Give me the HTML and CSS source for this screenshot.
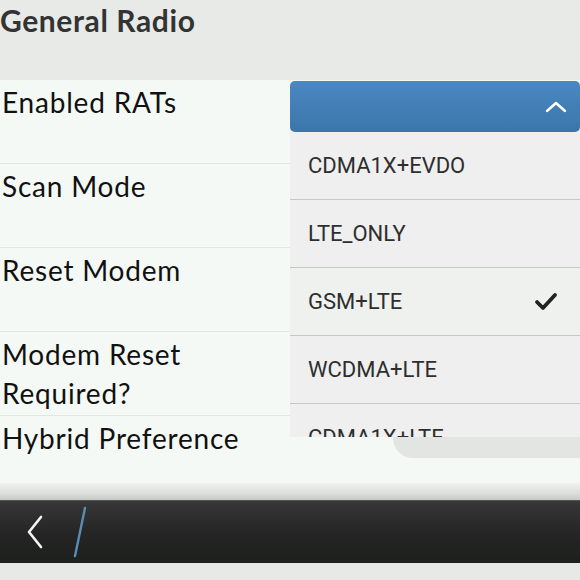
FILE: index.html
```html
<!DOCTYPE html>
<html>
<head>
<meta charset="utf-8">
<link rel="stylesheet" href="styles.css">
</head>
<body>
<div class="page">
  <header class="title-area">
    <h1 class="title">General Radio</h1>
  </header>
  <main class="list">
    <div class="row"><span class="label">Enabled RATs</span></div>
    <div class="row"><span class="label">Scan Mode</span></div>
    <div class="row"><span class="label">Reset Modem</span></div>
    <div class="row"><span class="label">Modem Reset<br>Required?</span></div>
    <div class="row last"><span class="label">Hybrid Preference</span></div>
  </main>
  <div class="shadow-strip"></div>
  <footer class="actionbar">
    <svg class="back" width="20" height="34" viewBox="0 0 20 34"><path d="M15 2 L3 17 L15 32" fill="none" stroke="#f4f4f4" stroke-width="2.6" stroke-linecap="round" stroke-linejoin="round"/></svg>
    <svg class="slash" width="16" height="52" viewBox="0 0 16 52"><path d="M13 2 L3 50" fill="none" stroke="#5a8db5" stroke-width="2.4" stroke-linecap="round"/></svg>
  </footer>
  <div class="bottom-strip"></div>

  <div class="dropdown-tail"></div>
  <div class="dropdown">
    <div class="dd-head">
      <svg width="22" height="14" viewBox="0 0 22 14"><path d="M2 11 L11 3 L20 11" fill="none" stroke="#ffffff" stroke-width="2.4" stroke-linecap="round" stroke-linejoin="round"/></svg>
    </div>
    <div class="dd-list">
      <div class="opt">CDMA1X+EVDO</div>
      <div class="opt">LTE_ONLY</div>
      <div class="opt selected">GSM+LTE
        <svg class="check" width="24" height="20" viewBox="0 0 24 20"><path d="M3 10 L9 16 L21 3" fill="none" stroke="#222" stroke-width="3.8" stroke-linecap="round" stroke-linejoin="round"/></svg>
      </div>
      <div class="opt">WCDMA+LTE</div>
      <div class="opt">CDMA1X+LTE</div>
    </div>
  </div>
</div>
</body>
</html>
```

FILE: styles.css
```css
html, body {
  margin: 0;
  padding: 0;
}
body {
  width: 580px;
  height: 580px;
  overflow: hidden;
  background: #e7eae7;
  font-family: Lato, "Open Sans", sans-serif;
}
.page {
  position: relative;
  width: 580px;
  height: 580px;
  display: flex;
  flex-direction: column;
}
.title-area {
  height: 80px;
  background: #e7eae7;
  flex: none;
}
.title {
  margin: 0;
  padding: 2px 0 0 0;
  font-size: 30px;
  line-height: 36px;
  font-weight: 700;
  letter-spacing: 0.6px;
  color: #333;
}
.list {
  background: #f5f9f5;
  height: 403px;
  flex: none;
}
.row {
  height: 83px;
  border-bottom: 1px solid #e2e6e2;
  box-sizing: content-box;
  padding: 0 0 0 2px;
}
.row.last {
  border-bottom: none;
}
.label {
  display: block;
  padding-top: 3px;
  font-size: 28px;
  line-height: 39px;
  letter-spacing: 0.8px;
  color: #111;
}
.shadow-strip {
  height: 17px;
  flex: none;
  background: linear-gradient(#eef1ee, #dcdfdc 60%, #c5c8c5);
}
.actionbar {
  height: 63px;
  flex: none;
  background: linear-gradient(#373737, #232423 55%, #1e201e);
  border-top: 1px solid #555;
  box-sizing: border-box;
  display: flex;
  align-items: center;
  padding-left: 26px;
  gap: 26px;
}
.bottom-strip {
  flex: 1;
  background: #e6e9e6;
}
.dropdown {
  position: absolute;
  left: 290px;
  top: 81px;
  width: 290px;
  height: 356px;
  overflow: hidden;
  background: #efefef;
}
.dd-head {
  height: 51px;
  border-radius: 5px;
  background: linear-gradient(#4b88c3, #3b76aa);
  display: flex;
  align-items: center;
  justify-content: flex-end;
  padding-right: 13px;
}
.dd-list {
  font-family: Roboto, "Open Sans", sans-serif;
}
.opt {
  height: 67px;
  border-bottom: 1px solid #c6c7c6;
  display: flex;
  align-items: center;
  padding-left: 18px;
  padding-right: 22px;
  font-size: 22px;
  color: #2e2e2e;
  justify-content: space-between;
}
.opt.selected {
  background: #eef1ee;
}
.dropdown-tail {
  position: absolute;
  left: 393px;
  top: 430px;
  width: 187px;
  height: 28px;
  border-radius: 0 0 0 20px;
  background: #e2e5e2;
}
```
